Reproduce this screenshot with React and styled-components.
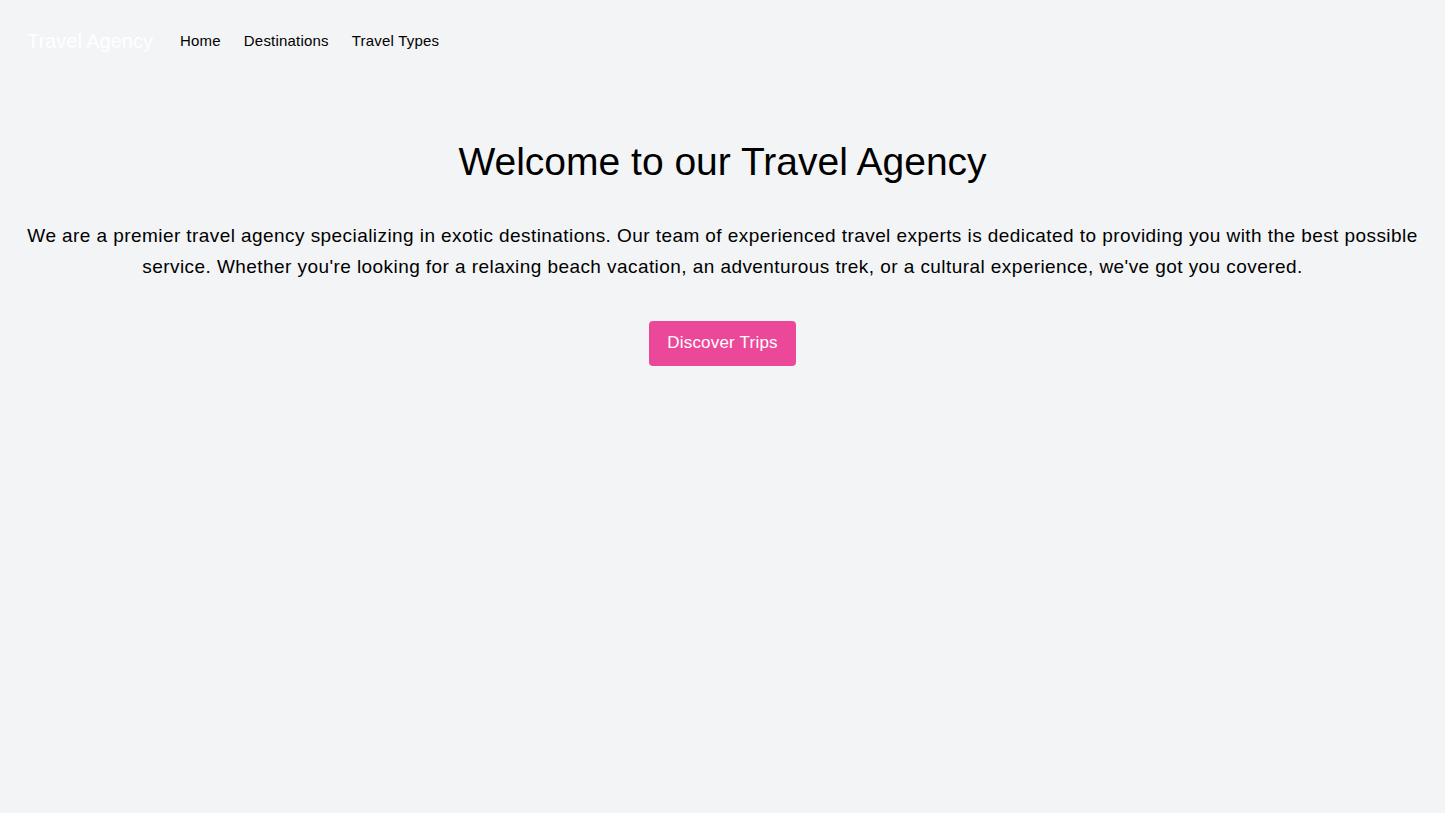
import React from "react";
import styled, { createGlobalStyle } from "styled-components";

const GlobalStyle = createGlobalStyle`
  html, body {
    margin: 0;
    padding: 0;
    background: #f3f4f6;
    font-family: "Liberation Sans", Arial, sans-serif;
  }
  * { box-sizing: border-box; }
`;

const Page = styled.div`
  min-height: 813px;
  background: #f3f4f6;
`;

const Nav = styled.nav`
  display: flex;
  align-items: center;
  padding: 27px 27px;
`;

const Brand = styled.a`
  color: #ffffff;
  font-size: 20px;
  line-height: 28px;
  margin-right: 27px;
  text-decoration: none;
`;

const NavLink = styled.a`
  color: #000;
  font-size: 15px;
  line-height: 20px;
  letter-spacing: 0.2px;
  margin-right: 23px;
  text-decoration: none;
`;

const Hero = styled.section`
  display: flex;
  flex-direction: column;
  align-items: center;
  text-align: center;
  padding: 56px 16px 0;
`;

const Title = styled.h1`
  margin: 0;
  font-size: 39px;
  line-height: 48px;
  font-weight: 400;
  color: #000;
`;

const Lead = styled.p`
  margin: 34px 0 0;
  font-size: 19px;
  line-height: 31px;
  letter-spacing: 0.43px;
  color: #000;
`;

const Button = styled.button`
  margin-top: 39px;
  background: #ec4899;
  color: #fff;
  border: none;
  border-radius: 4px;
  font-family: inherit;
  font-size: 17px;
  line-height: 24px;
  letter-spacing: 0.2px;
  padding: 10px 18px 11px;
  cursor: pointer;
`;

export default function App() {
  return (
    <Page>
      <GlobalStyle />
      <Nav>
        <Brand href="#">Travel Agency</Brand>
        <NavLink href="#">Home</NavLink>
        <NavLink href="#">Destinations</NavLink>
        <NavLink href="#">Travel Types</NavLink>
      </Nav>
      <Hero>
        <Title>Welcome to our Travel Agency</Title>
        <Lead>
          We are a premier travel agency specializing in exotic destinations. Our team of experienced travel experts is dedicated to providing you with the best possible service. Whether you're looking for a relaxing beach vacation, an adventurous trek, or a cultural experience, we've got you covered.
        </Lead>
        <Button>Discover Trips</Button>
      </Hero>
    </Page>
  );
}
